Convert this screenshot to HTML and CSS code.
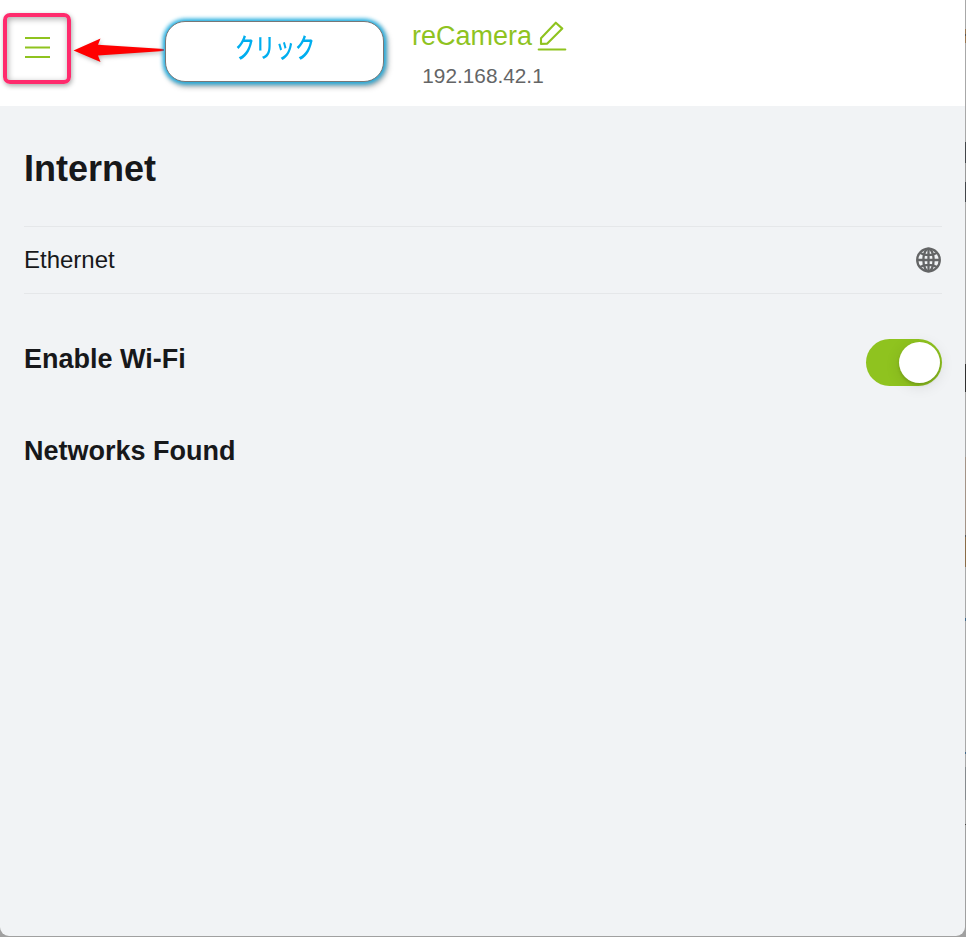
FILE: index.html
```html
<!DOCTYPE html>
<html lang="ja">
<head>
<meta charset="utf-8">
<title>reCamera</title>
<link rel="stylesheet" href="styles.css">
</head>
<body>
<div class="window">
  <header class="header">
    <button class="menu" aria-label="Menu">
      <svg width="26" height="22" viewBox="0 0 26 22" stroke="#8fc31f" stroke-width="2"><path d="M1 1h25M1 10.5h25M1 20h25"/></svg>
    </button>
    <div class="device">
      <h1 class="device-name"><span>reCamera</span>
        <svg class="pencil" width="30" height="32" viewBox="0 0 30 32" fill="none" stroke="#8fc31f" stroke-width="2.1" stroke-linejoin="round" stroke-linecap="round"><path d="M4 17.2 18.8 1.7 25.3 7.6 10.3 22.6 4 22.9ZM1.7 28.5h26.6"/></svg>
      </h1>
      <div class="address">192.168.42.1</div>
    </div>
    <div class="highlight"></div>
    <svg class="arrow" width="96" height="32" viewBox="0 0 96 32"><path d="M3.5 16.5 30.5 4.5 28 10.7 94 15 94 17 28 21.5 30.5 28Z" fill="red"/></svg>
    <div class="callout"><span class="callout-text">クリック</span></div>
  </header>
  <main class="content">
    <h2 class="title">Internet</h2>
    <div class="row">
      <span>Ethernet</span>
      <svg class="globe" width="26" height="26" viewBox="0 0 26 26" fill="none" stroke="#646566" stroke-width="2.3"><circle cx="13.5" cy="13" r="11.3"/><ellipse cx="13.5" cy="13" rx="5.1" ry="11.3"/><path d="M13.5 1.5v23M2 13h23M4.5 5.8Q13.5 10.4 22.5 5.8M4.5 20.2Q13.5 15.6 22.5 20.2"/></svg>
    </div>
    <div class="wifi">
      <h3 class="subtitle">Enable Wi-Fi</h3>
      <div class="switch"><div class="knob"></div></div>
    </div>
    <h3 class="subtitle">Networks Found</h3>
  </main>
</div>
</body>
</html>
```
FILE: styles.css
```css
* { box-sizing: border-box; }
body {
  margin: 0;
  height: 937px;
  overflow: hidden;
  color: #17181a;
  font-family: "Liberation Sans", Arial, sans-serif;
  padding: 0 1px 1px 0;
  background: linear-gradient(#a8a8a8 0 29px, #997650 29px 34px, #555 34px 36px, #997650 36px 43px, #a8a8a8 43px 142px, #424549 142px 163px, #999 163px 182px, #424549 182px 202px, #a8a8a8 202px 364px, #303030 364px 392px, #a8a8a8 392px 457px, #a39387 457px 535px, #555 535px 537px, #8a6c48 537px 567px, #a8a8a8 567px 618px, #42698a 618px 621px, #a8a8a8 621px 752px, #42698a 752px 754px, #a8a8a8 754px 767px, #868a8d 767px 800px, #a8a8a8 800px 824px, #444 824px 825px, #a0a0a0 825px);
}
.window {
  height: 936px;
  overflow: hidden;
  background: #f1f3f5;
  border-radius: 0 0 9px 9px;
}
.header {
  position: relative;
  height: 106px;
  display: grid;
  grid-template-columns: 50px 1fr 50px;
  padding: 0 24px;
  background: #fff;
}
.menu {
  align-self: start;
  justify-self: start;
  width: 26px;
  height: 22px;
  margin-top: 37px;
  padding: 0;
  border: 0;
  background: none;
}
.menu svg { display: block; }
.device {
  display: flex;
  flex-direction: column;
  align-items: center;
  padding-top: 21px;
}
.device-name {
  display: flex;
  gap: 5px;
  margin: 0 0 0 14px;
  height: 32px;
  color: #8fc31f;
  font-size: 27px;
  font-weight: 400;
  line-height: 31px;
}
.address {
  margin: 11px 0 0 1px;
  color: #646566;
  font-size: 20.8px;
  line-height: 24px;
}
.highlight {
  position: absolute;
  left: 3px;
  top: 12.5px;
  width: 67.5px;
  height: 71px;
  border: 4px solid #ff2b6d;
  border-radius: 7px;
  box-shadow: 1px 2px 5px #0005, inset 1px 2px 6px #0005;
}
.arrow {
  position: absolute;
  left: 70px;
  top: 34px;
  filter: drop-shadow(1px 2px 2px #0004);
}
.callout {
  position: absolute;
  left: 165px;
  top: 21px;
  width: 219px;
  height: 61px;
  padding-top: 8px;
  text-align: center;
  border: 1px solid #777;
  border-radius: 20px;
  background: #fff;
  box-shadow: 0 0 4px 2px #14aee5, 2px 3px 6px 1px #0006;
}
.callout-text {
  display: inline-block;
  color: #00aeef;
  font: 500 27px/34px "Noto Sans CJK JP", sans-serif;
  transform: scaleX(.74);
}
.content { padding: 39px 24px 0; }
.title {
  margin: 0;
  height: 81px;
  font-size: 36px;
  line-height: 48px;
}
.row {
  display: flex;
  align-items: center;
  justify-content: space-between;
  height: 68px;
  margin-right: -1px;
  border: solid #e5e7e9;
  border-width: 1px 0;
  font-size: 24px;
}
.globe { margin-right: 1px; }
.wifi {
  display: flex;
  justify-content: space-between;
  height: 92px;
  margin: 45px -1px 0 0;
}
.subtitle {
  margin: 0;
  font-size: 27px;
  line-height: 40px;
}
.switch {
  width: 76px;
  height: 47px;
  padding: 3px 2px 3px 3px;
  display: flex;
  justify-content: flex-end;
  border-radius: 24px;
  background: #8fc31f;
}
.knob {
  width: 41px;
  height: 41px;
  border-radius: 50%;
  background: #fff;
  box-shadow: 0 3px 15px #0000001c, 0 2px 3px #00000025;
}
```
